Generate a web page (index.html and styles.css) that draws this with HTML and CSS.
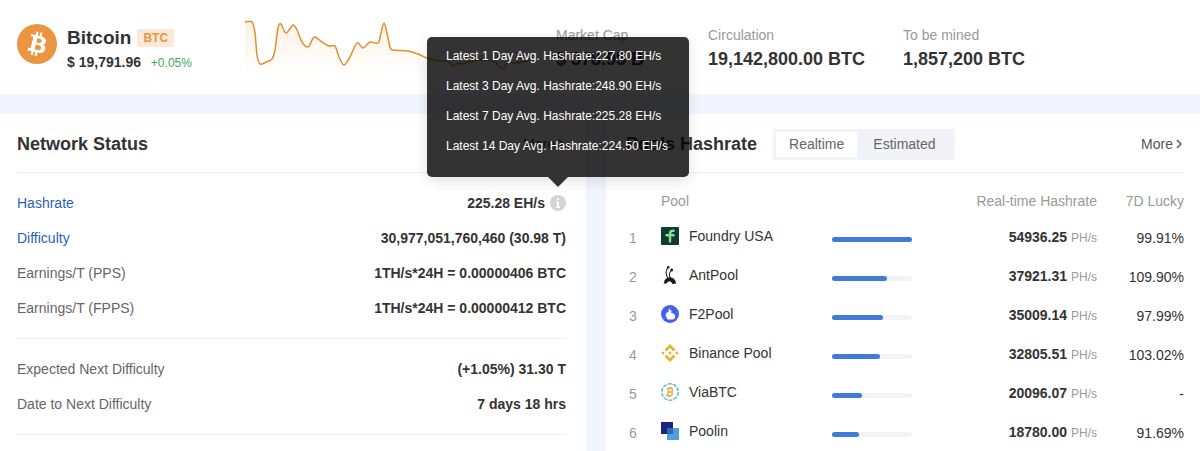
FILE: index.html
```
<!DOCTYPE html>
<html lang="en">
<head>
    <meta charset="UTF-8">
    <meta name="viewport" content="width=device-width, initial-scale=1.0">
    <title>Bitcoin Network Status</title>
    <link rel="stylesheet" href="styles.css">
</head>
<body>

<header class="coin-bar">
    <svg class="coin-logo" viewBox="0 0 32 32" aria-hidden="true">
        <circle cx="16" cy="16" r="16" fill="#ec9540"/>
        <path fill="#fff" d="M23.2 14c.3-2.1-1.3-3.2-3.5-4l.7-2.8-1.7-.4-.7 2.7-1.4-.3.7-2.8-1.7-.4-.7 2.8-3.5-.9-.4 1.8s1.2.3 1.2.3c.7.2.8.6.8 1l-2 7.8c-.1.2-.3.5-.8.4l-1.2-.3-.8 2 3.4.8-.7 2.9 1.7.4.7-2.8 1.4.3-.7 2.8 1.7.5.7-2.9c2.9.6 5.1.3 6-2.3.8-2.1 0-3.3-1.5-4.1 1.1-.3 1.9-1 2.3-2.5zm-3.9 5.5c-.5 2.1-4.1 1-5.2.7l.9-3.8c1.2.3 4.9.9 4.3 3.1zm.5-5.5c-.4 1.900-3.400.9-4.300.7l.8-3.400c1 .2 4 .7 3.500 2.700z"/>
    </svg>
    <div class="coin-info">
        <div class="coin-name">Bitcoin <span class="badge">BTC</span></div>
        <div class="coin-price">$ 19,791.96 <span class="change">+0.05%</span></div>
    </div>
    <svg class="chart" viewBox="0 0 286 60" aria-hidden="true">
        <defs>
            <linearGradient id="fade" x1="0" y1="0" x2="0" y2="1">
                <stop offset="0" stop-color="#ec9540" stop-opacity=".14"/>
                <stop offset="1" stop-color="#ec9540" stop-opacity="0"/>
            </linearGradient>
        </defs>
        <path id="chartArea" fill="url(#fade)"/>
        <path id="chartLine" fill="none" stroke="#e28f33" stroke-width="1.5"/>
    </svg>
    <dl class="stats">
        <div class="stat"><dt>Market Cap</dt><dd>$ 378.95 B</dd></div>
        <div class="stat"><dt>Circulation</dt><dd>19,142,800.00 BTC</dd></div>
        <div class="stat"><dt>To be mined</dt><dd>1,857,200 BTC</dd></div>
    </dl>
</header>

<main class="panels">
    <section class="panel network">
        <div class="panel-head">
            <h2>Network Status</h2>
            <a class="more" href="#">More<svg viewBox="0 0 6 10"><path d="M1 1l4 4-4 4"/></svg></a>
        </div>
        <dl class="group">
            <div class="row">
                <dt><a href="#">Hashrate</a></dt>
                <dd>225.28 EH/s
                    <span class="info">
                        <svg viewBox="0 0 16 16" aria-hidden="true">
                            <circle cx="8" cy="8" r="8" fill="#d4d4d4"/>
                            <path fill="#fff" d="M7 3h2v2H7zM6 6.500h3v5h1V13H6v-1.500h1V8H6z"/>
                        </svg>
                        <span class="tooltip" role="tooltip">
                            <span>Latest 1 Day Avg. Hashrate:227.80 EH/s</span>
                            <span>Latest 3 Day Avg. Hashrate:248.90 EH/s</span>
                            <span>Latest 7 Day Avg. Hashrate:225.28 EH/s</span>
                            <span>Latest 14 Day Avg. Hashrate:224.50 EH/s</span>
                        </span>
                    </span>
                </dd>
            </div>
            <div class="row"><dt><a href="#">Difficulty</a></dt><dd>30,977,051,760,460 (30.98 T)</dd></div>
            <div class="row"><dt>Earnings/T (PPS)</dt><dd>1TH/s*24H = 0.00000406 BTC</dd></div>
            <div class="row"><dt>Earnings/T (FPPS)</dt><dd>1TH/s*24H = 0.00000412 BTC</dd></div>
        </dl>
        <dl class="group">
            <div class="row"><dt>Expected Next Difficulty</dt><dd>(+1.05%) 31.30 T</dd></div>
            <div class="row"><dt>Date to Next Difficulty</dt><dd>7 days 18 hrs</dd></div>
        </dl>
    </section>

    <section class="panel pools">
        <div class="panel-head">
            <h2>Pools Hashrate</h2>
            <div class="tabs">
                <button type="button" class="active">Realtime</button>
                <button type="button">Estimated</button>
            </div>
            <a class="more" href="#">More<svg viewBox="0 0 6 10"><path d="M1 1l4 4-4 4"/></svg></a>
        </div>
        <table>
            <colgroup>
                <col class="col-rank"><col class="col-pool"><col class="col-bar"><col><col class="col-lucky">
            </colgroup>
            <thead>
                <tr><th></th><th>Pool</th><th></th><th class="num">Real-time Hashrate</th><th class="num">7D Lucky</th></tr>
            </thead>
            <tbody>
                <tr>
                    <td class="rank">1</td>
                    <td><div class="pool">
                        <svg viewBox="0 0 18 18">
                            <rect width="18" height="18" rx="1" fill="#0f3a30"/>
                            <path d="M13.500 3.800H12Q9 3.800 9 6.800V15.500M4.500 8.200h9" fill="none" stroke="#8be08f" stroke-width="2.400"/>
                        </svg>
                        Foundry USA
                    </div></td>
                    <td><div class="bar"><div style="width: 100%"></div></div></td>
                    <td class="num"><b>54936.25</b> <small>PH/s</small></td>
                    <td class="num">99.91%</td>
                </tr>
                <tr>
                    <td class="rank">2</td>
                    <td><div class="pool">
                        <svg viewBox="0 0 18 18">
                            <path d="M7.500 13Q3 7.500 6.800 1.500M9.500 12Q6.800 8.500 10.200 4.500" fill="none" stroke="#1d1718" stroke-width="1.100"/>
                            <circle cx="7.200" cy="1.300" r="1.200" fill="#1d1718"/>
                            <circle cx="10.700" cy="4" r="1.400" fill="#1d1718"/>
                            <path d="M2.500 17.500q1.200-1.500.9-3 1.600-2.800 5.400-3.300 5.200.1 6.400 6.300l-3.900.5q-.8-3.200-3.800-2.500-1.300.5-1.800 2z" fill="#1d1718"/>
                        </svg>
                        AntPool
                    </div></td>
                    <td><div class="bar"><div style="width: 69%"></div></div></td>
                    <td class="num"><b>37921.31</b> <small>PH/s</small></td>
                    <td class="num">109.90%</td>
                </tr>
                <tr>
                    <td class="rank">3</td>
                    <td><div class="pool">
                        <svg viewBox="0 0 18 18">
                            <circle cx="9" cy="9" r="9" fill="#4560ee"/>
                            <path d="M8.300 3l1 3L10 4.500q1 1.500.2 3.500 3.800.2 4 3.800-.2 2.500-2.500 2.700H7q-1.800-.4-1.200-2Q4 10.800 5 8.500q.8-1.300 2.500-1.500Q7.300 5 8.300 3z" fill="#fff"/>
                        </svg>
                        F2Pool
                    </div></td>
                    <td><div class="bar"><div style="width: 64%"></div></div></td>
                    <td class="num"><b>35009.14</b> <small>PH/s</small></td>
                    <td class="num">97.99%</td>
                </tr>
                <tr>
                    <td class="rank">4</td>
                    <td><div class="pool">
                        <svg viewBox="0 0 18 18" fill="#e3b53c">
                            <path d="M9 0l5.500 5.500-2 2L9 4 5.500 7.500l-2-2zM9 18l5.500-5.500-2-2L9 14l-3.500-3.500-2 2zM2 7.200L3.800 9 2 10.800.2 9zM16 7.200L17.800 9 16 10.800 14.200 9zM9 7.200L10.800 9 9 10.800 7.200 9z"/>
                        </svg>
                        Binance Pool
                    </div></td>
                    <td><div class="bar"><div style="width: 60%"></div></div></td>
                    <td class="num"><b>32805.51</b> <small>PH/s</small></td>
                    <td class="num">103.02%</td>
                </tr>
                <tr>
                    <td class="rank">5</td>
                    <td><div class="pool">
                        <svg viewBox="0 0 18 18" fill="none">
                            <circle cx="9" cy="9" r="8.200" stroke="#55b9c6" stroke-width="1.400" stroke-dasharray="4 1.150"/>
                            <path d="M7.700 4.800L6.300 13M5.800 5.500h3.900q2.400.2 2 2-.4 1.500-2.300 1.500H7.200 9.700q2 .3 1.600 2.100-.4 1.500-2.400 1.500H5M9.100 3.700l-.3 1.800M11 4l-.3 1.800M7.600 12.600l-.3 1.700M9.500 12.600l-.3 1.700" stroke="#efa83f" stroke-width="1.300"/>
                        </svg>
                        ViaBTC
                    </div></td>
                    <td><div class="bar"><div style="width: 37%"></div></div></td>
                    <td class="num"><b>20096.07</b> <small>PH/s</small></td>
                    <td class="num">-</td>
                </tr>
                <tr>
                    <td class="rank">6</td>
                    <td><div class="pool">
                        <svg viewBox="0 0 18 18">
                            <path d="M0 0h12v12H0z" fill="#1c2280"/>
                            <path d="M6 6h12v12H6z" fill="#4f9fdc"/>
                            <path d="M6 6h6v6H6z" fill="#2f68b4"/>
                        </svg>
                        Poolin
                    </div></td>
                    <td><div class="bar"><div style="width: 34%"></div></div></td>
                    <td class="num"><b>18780.00</b> <small>PH/s</small></td>
                    <td class="num">91.69%</td>
                </tr>
            </tbody>
        </table>
    </section>
</main>

<script>
    // price history, x and y in chart units
    const points = [[0,7],[7,7],[10,18],[12,40],[15,49],[21,47],[27,44],[30,35],[33,13],[36,9],[41,18],[48,10],[52,15],[57,27],[63,32],[67,25],[70,22],[77,27],[84,31],[90,31],[94,42],[99,50],[105,42],[112,28],[118,33],[125,27],[133,28],[136,18],[139,8],[142,18],[145,32],[148,35],[163,36],[173,39],[182,43],[190,45],[195,46],[202,46],[208,51],[213,48],[218,49],[223,47],[233,45],[248,46],[254,51],[258,54],[263,47],[270,48],[286,45]];
    // smooth curve that passes through every point
    let d = 'M' + points[0];
    for (let i = 0; i < points.length - 1; i++) {
        const prev = points[i - 1] || points[i];
        const [x1, y1] = points[i];
        const [x2, y2] = points[i + 1];
        const next = points[i + 2] || points[i + 1];
        d += ' C' + [x1 + (x2 - prev[0]) / 6, y1 + (y2 - prev[1]) / 6,
            x2 - (next[0] - x1) / 6, y2 - (next[1] - y1) / 6, x2, y2];
    }
    document.getElementById('chartLine').setAttribute('d', d);
    document.getElementById('chartArea').setAttribute('d', d + ' V60 H0 Z');
</script>

</body>
</html>
```
FILE: styles.css
```
* {
    box-sizing: border-box;
}
body {
    margin: 0;
    background-color: #f0f5fe;
    font-family: "Liberation Sans", Arial, sans-serif;
    font-size: 14px;
    line-height: 20px;
    color: #333;
}
h2, dl, dd {
    margin: 0;
}
a {
    color: #2a5fc0;
    text-decoration: none;
}
.coin-bar {
    display: flex;
    align-items: flex-start;
    height: 94px;
    padding-left: 17px;
    background: white;
}
.coin-logo {
    flex: none;
    width: 40px;
    height: 40px;
    margin-top: 24px;
}
.coin-info {
    flex: none;
    width: 178px;
    margin-top: 25px;
    padding-left: 10px;
}
.coin-name {
    display: flex;
    align-items: center;
    height: 25px;
    font-size: 19px;
    font-weight: bold;
}
.badge {
    margin-left: 6px;
    padding: 0 6px;
    border-radius: 2px;
    background-color: #fce8d6;
    color: #ec9540;
    font-size: 12px;
    line-height: 18px;
}
.coin-price {
    line-height: 24px;
    font-weight: bold;
}
.change {
    margin-left: 6px;
    color: #3cab5a;
    font-size: 12px;
    font-weight: normal;
}
.chart {
    flex: none;
    width: 286px;
    height: 60px;
    margin: 15px 0 0 10px;
}
.stats {
    display: grid;
    grid-template-columns: 152px 195px auto;
    margin: 25px 0 0 25px;
    white-space: nowrap;
}
.stat dt {
    color: #999;
}
.stat dd {
    font-size: 18px;
    font-weight: bold;
    line-height: 28px;
}
.panels {
    display: grid;
    grid-template-columns: 586fr 594fr;
    gap: 20px;
    margin-top: 20px;
}
.panel {
    background: white;
}
.network {
    padding: 0 20px 0 17px;
}
.pools {
    padding: 0 16px 0 20px;
}
.panel-head {
    display: flex;
    align-items: center;
    height: 59px;
    padding-top: 2px;
    border-bottom: 1px solid #f0f0f0;
}
.panel-head h2 {
    font-size: 18px;
    line-height: 24px;
}
.more {
    margin-left: auto;
    color: #555;
}
.more svg {
    width: 6px;
    height: 10px;
    margin: 0 2px 0 3px;
    fill: none;
    stroke: #555;
    stroke-width: 1.5;
}
.group {
    padding: 12px 0 13px;
    border-bottom: 1px solid #f0f0f0;
}
.row {
    display: flex;
    justify-content: space-between;
    align-items: center;
    height: 35px;
}
.row dt {
    color: #666;
}
.row dd {
    display: flex;
    align-items: center;
    font-weight: bold;
}
.info {
    position: relative;
    width: 16px;
    height: 16px;
    margin-left: 5px;
}
.info svg {
    display: block;
}
.tooltip {
    position: absolute;
    bottom: 34px;
    left: 50%;
    transform: translateX(-50%);
    width: 262px;
    padding: 4px 19px 16px;
    border-radius: 5px;
    background-color: rgba(0, 0, 0, 0.8);
    box-shadow: 0 4px 14px rgba(0, 0, 0, 0.12);
    color: white;
    font-size: 12px;
    font-weight: normal;
    line-height: 30px;
    white-space: nowrap;
}
.tooltip span {
    display: block;
}
.tooltip::after {
    content: "";
    position: absolute;
    top: 100%;
    left: 50%;
    margin-left: -10px;
    border: 10px solid transparent;
    border-bottom: 0;
    border-top-color: #333;
}
.tabs {
    display: flex;
    margin-left: 16px;
    padding: 3px;
    background-color: #f2f3f8;
}
.tabs button {
    height: 25px;
    padding: 0 13px;
    border: none;
    background: none;
    color: #666;
    font: inherit;
    cursor: pointer;
}
.tabs button + button {
    padding: 0 16px;
}
.tabs .active {
    background: white;
}
table {
    width: 100%;
    table-layout: fixed;
    border-collapse: collapse;
}
.col-rank {
    width: 35px;
}
.col-pool {
    width: 171px;
}
.col-bar {
    width: 80px;
}
.col-lucky {
    width: 87px;
}
th, td {
    height: 39px;
    padding: 0;
    text-align: left;
    white-space: nowrap;
}
th {
    height: 45px;
    padding-top: 11px;
    color: #999;
    font-weight: normal;
}
.num {
    text-align: right;
}
.num small {
    color: #999;
    font-size: 12px;
}
.rank {
    padding-left: 3px;
    color: #999;
}
.pool {
    display: flex;
    align-items: center;
    gap: 10px;
    padding-bottom: 4px;
}
.pool svg {
    width: 18px;
    height: 18px;
}
.bar {
    height: 5px;
    margin-top: 4px;
    border-radius: 3px;
    background-color: #f2f3f6;
}
.bar div {
    height: 5px;
    border-radius: 3px;
    background-color: #3f7bd8;
}
```
